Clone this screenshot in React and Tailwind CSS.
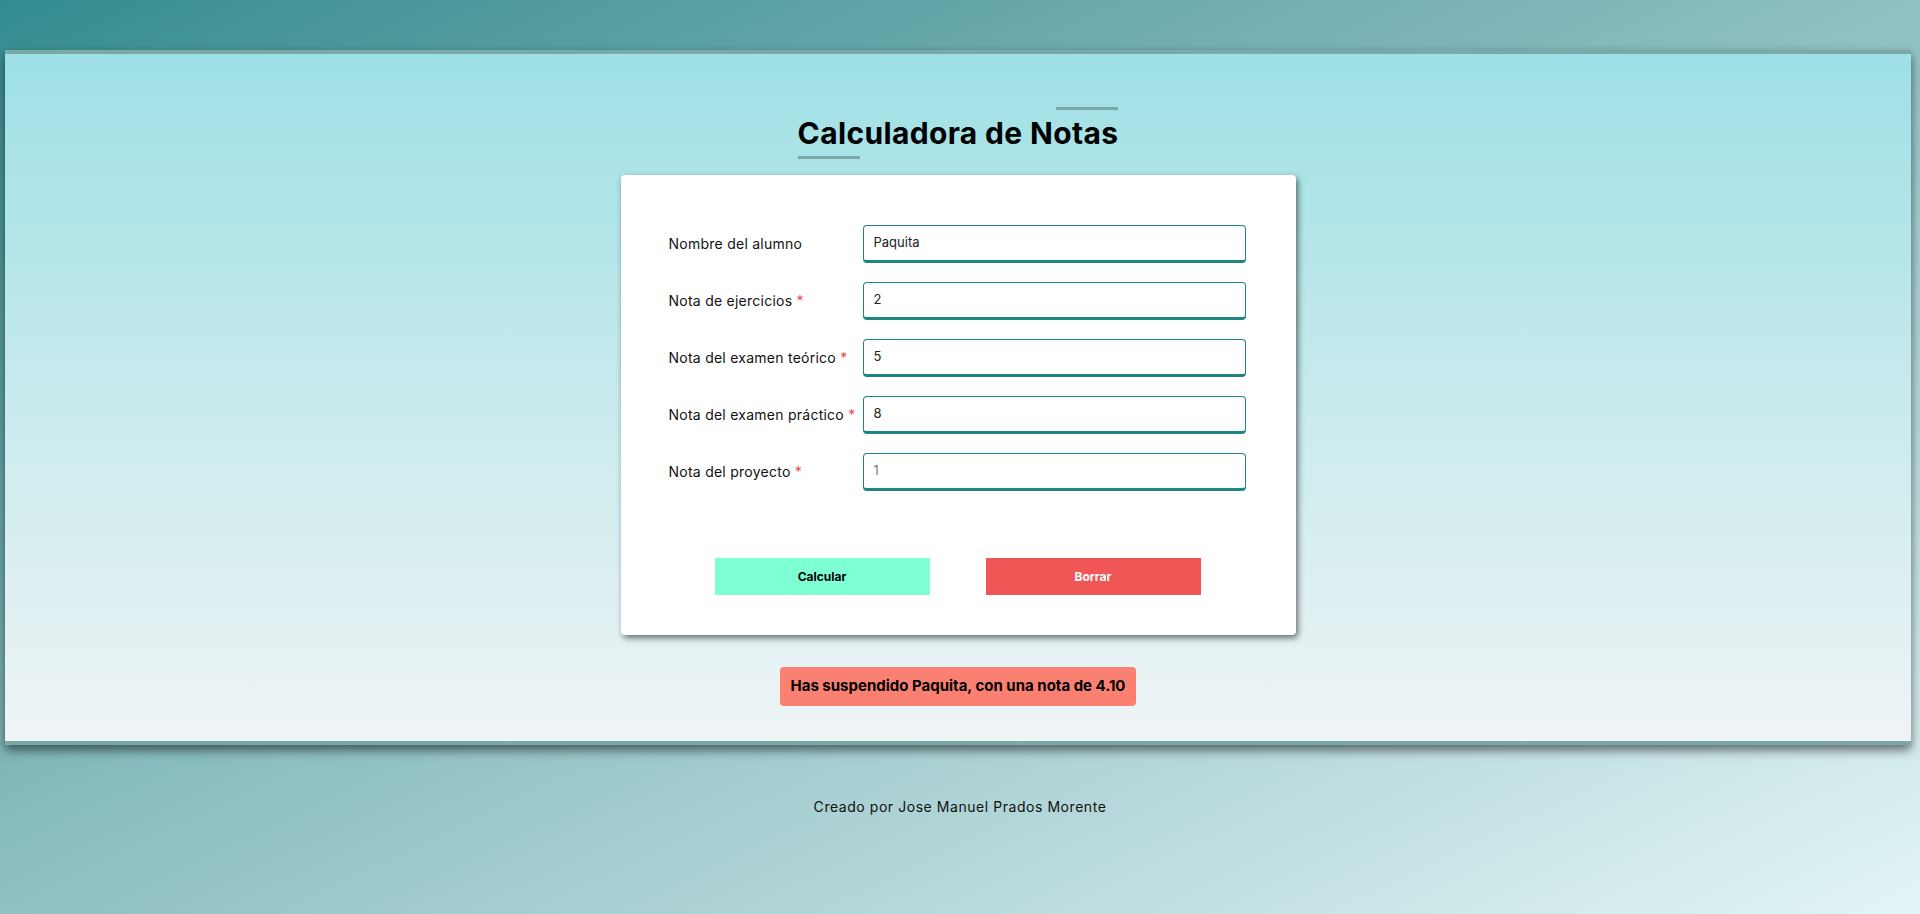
import React from "react";

const rows = [
  { label: "Nombre del alumno", value: "Paquita", req: false },
  { label: "Nota de ejercicios", value: "2", req: true },
  { label: "Nota del examen teórico", value: "5", req: true },
  { label: "Nota del examen práctico", value: "8", req: true },
  { label: "Nota del proyecto", value: "1", req: true, light: true },
];

export default function App() {
  return (
    <div
      className="w-full h-[914px] overflow-hidden bg-linear-to-br from-[#338c90] to-[#e3f5f7] pt-[50px] text-black"
      style={{ fontFamily: "Inter, 'Noto Sans', sans-serif" }}
    >
      <div className="ml-[5px] w-[1906px] border-y-4 border-[#7ba9a8] bg-linear-to-b from-[#9de0e5] to-[#eff4f5] shadow-[0_5px_10px_rgba(0,0,0,0.55)] pt-[53px] pb-[35px] flex flex-col items-center">
        <div className="flex flex-col w-fit">
          <div className="self-end w-[62px] h-[3px] bg-[#7fa9a9]" />
          <h1 className="mt-[5px] mb-[5px] text-[30px] leading-[36px] font-bold tracking-[0.35px]">
            Calculadora de Notas
          </h1>
          <div className="self-start w-[62px] h-[3px] bg-[#7fa9a9]" />
        </div>

        <div className="mt-[16px] w-[675px] bg-white rounded-[4px] shadow-[2px_3px_6px_rgba(0,0,0,0.55)] pt-[50px] pb-[40px] pl-[48px] pr-[50px]">
          <div className="flex flex-col gap-[19px]">
            {rows.map((r) => (
              <div key={r.label} className="flex items-center">
                <label className="w-[194px] text-[14px] tracking-[0.25px] text-[#111] pb-[2px]">
                  {r.label}
                  {r.req && <span className="text-[#f04848]"> *</span>}
                </label>
                <div
                  className={
                    "flex-1 h-[38px] rounded-[4px] border border-[#1f8582] border-b-[3px] flex items-center pl-[10px] text-[13px] " +
                    (r.light ? "text-[#777]" : "text-[#222]")
                  }
                >
                  {r.value}
                </div>
              </div>
            ))}
          </div>
          <div className="mt-[67px] flex justify-center gap-[56px] pl-[1px]">
            <button className="w-[215px] h-[37px] bg-[#7fffd4] text-[12px] font-bold text-black">
              Calcular
            </button>
            <button className="w-[215px] h-[37px] bg-[#f05656] text-[12px] font-bold text-white">
              Borrar
            </button>
          </div>
        </div>

        <div className="mt-[32px] h-[39px] w-[356px] rounded-[4px] bg-[#fa8072] flex items-center justify-center text-[15px] font-bold text-black">
          Has suspendido Paquita, con una nota de 4.10
        </div>
      </div>

      <p className="mt-[52px] text-center text-[14px] leading-[20px] tracking-[0.55px] text-[#111]">
        Creado por Jose Manuel Prados Morente
      </p>
    </div>
  );
}
